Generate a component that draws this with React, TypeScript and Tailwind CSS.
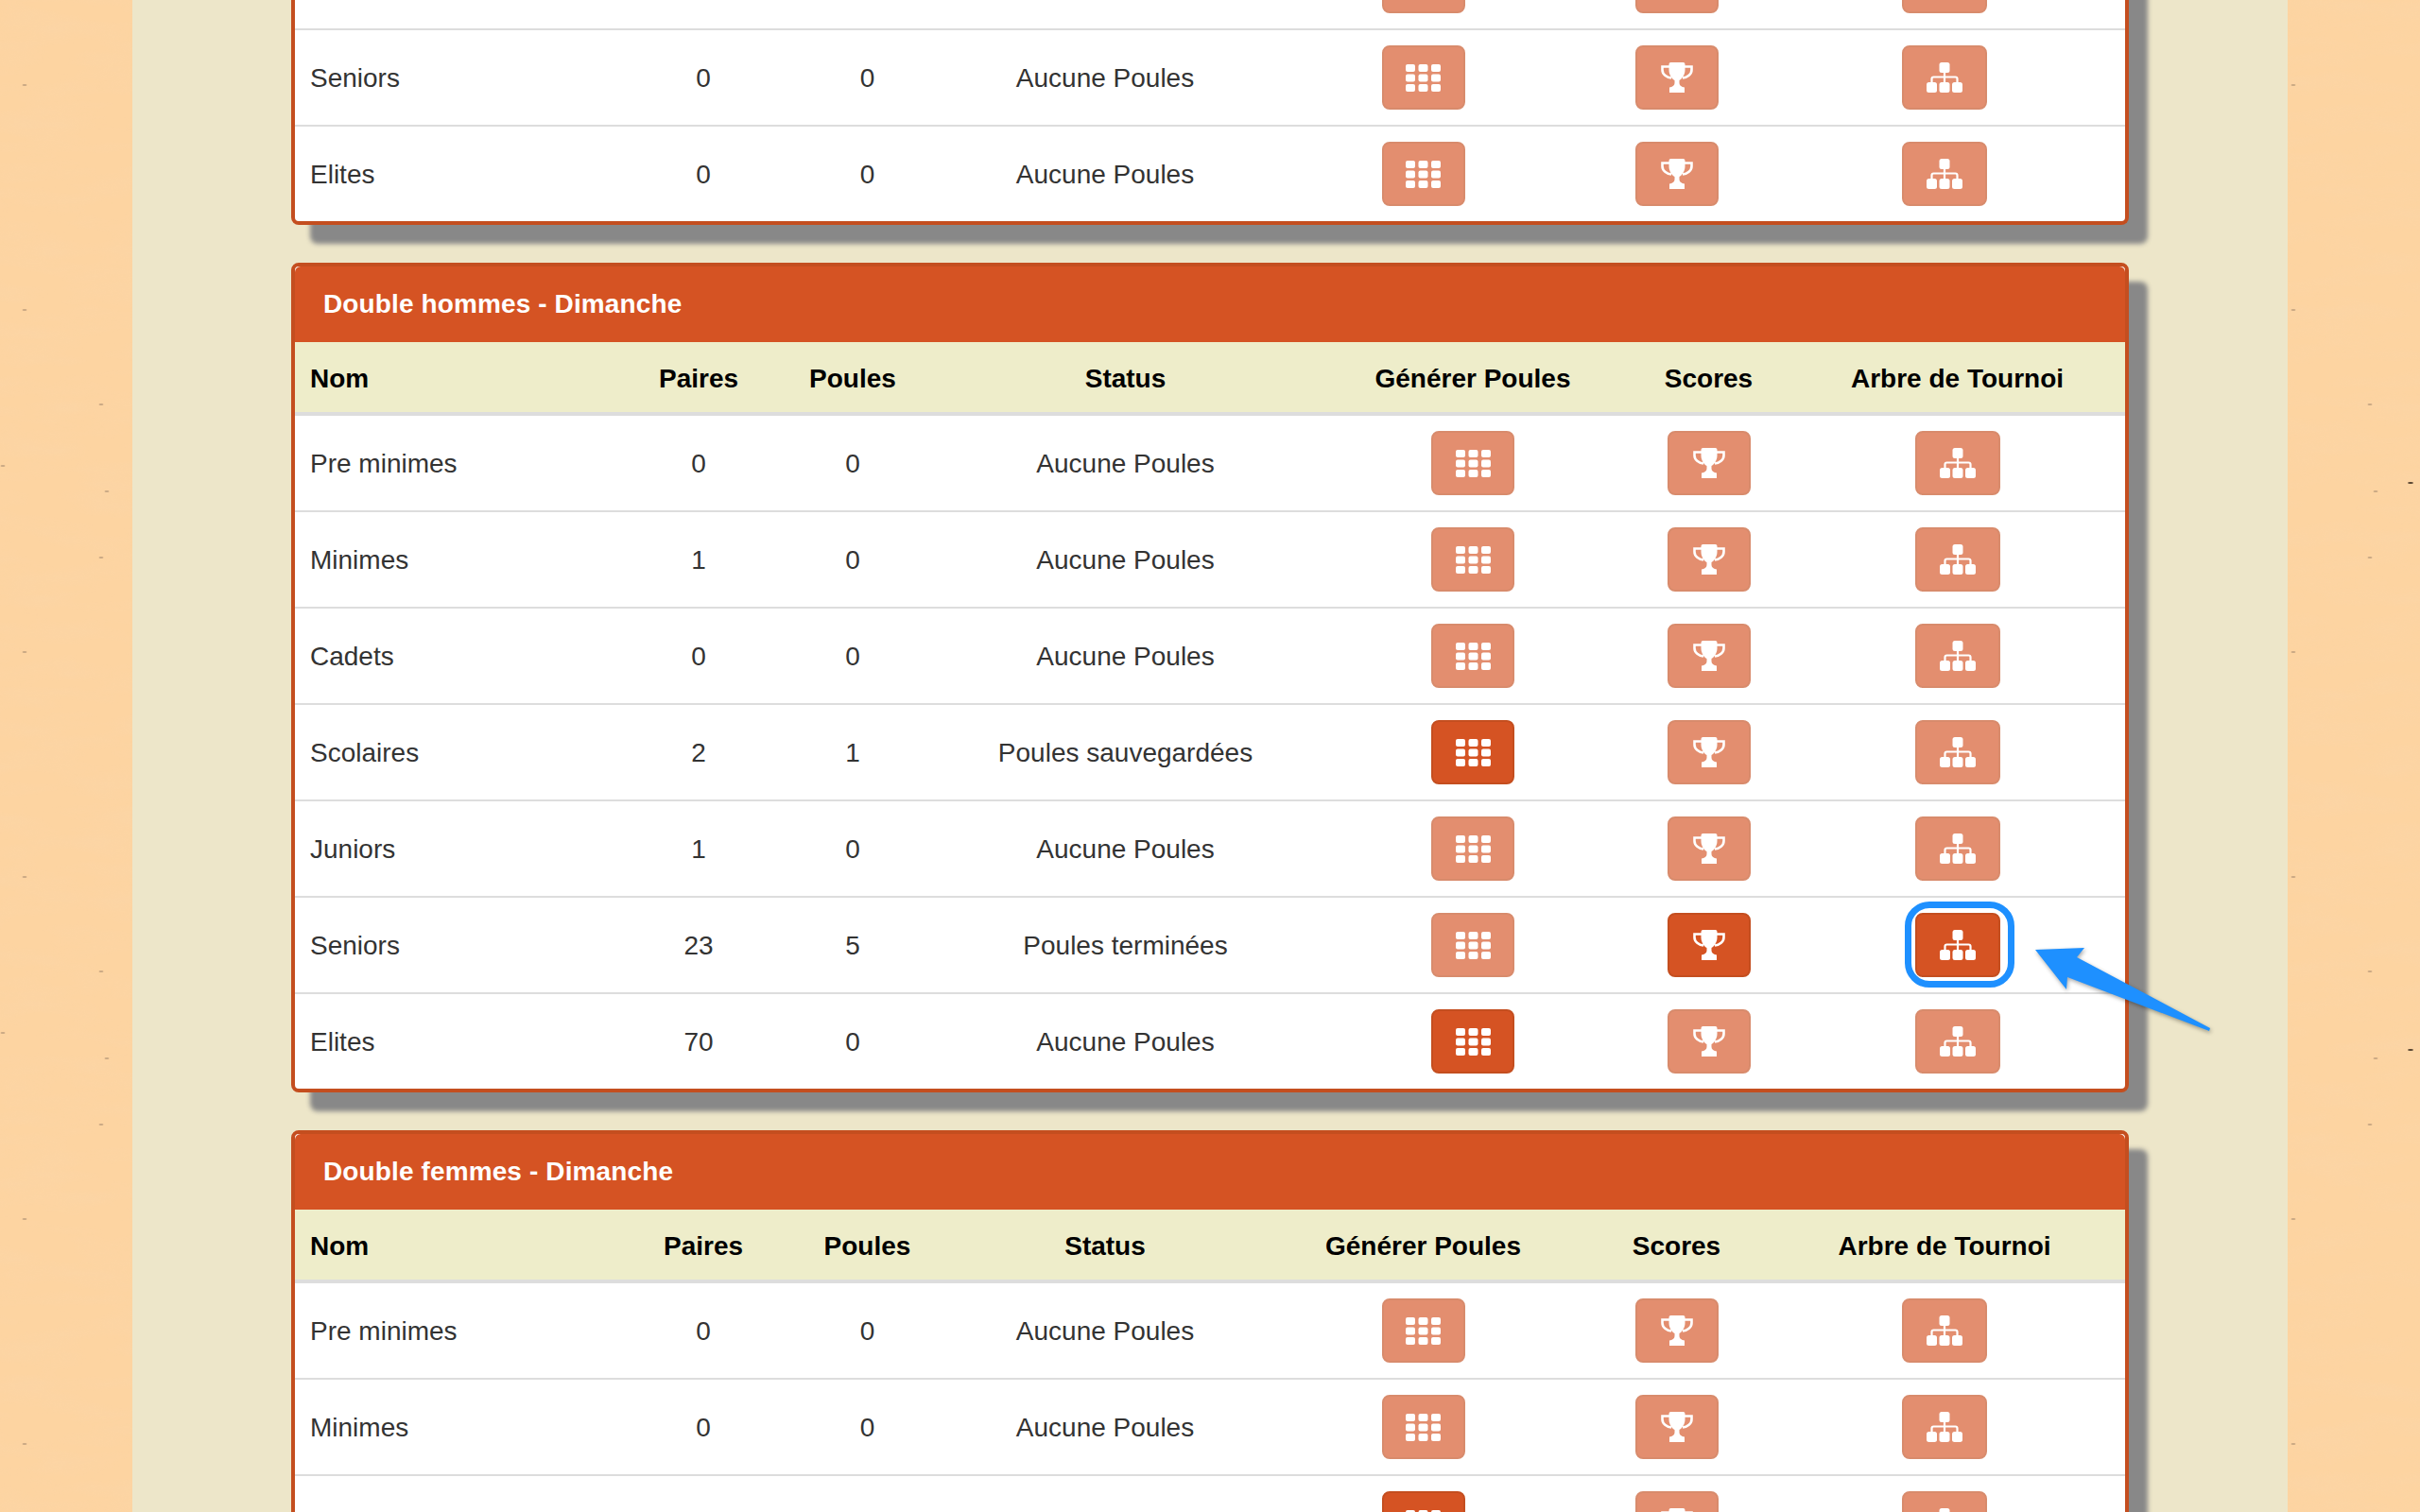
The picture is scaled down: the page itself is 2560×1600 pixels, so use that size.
const wideStatus = ["w-[349px]", "w-[156px]", "w-[170px]", "w-[407px]", "w-[328px]", "w-[171px]", "w-[355px]"];
const wideButtons = ["w-[349px]", "w-[166px]", "w-[181px]", "w-[322px]", "w-[351px]", "w-[185px]", "w-[382px]"];

const headers = ["Nom", "Paires", "Poules", "Status", "Générer Poules", "Scores", "Arbre de Tournoi"];

interface Row {
  name?: string;
  pairs?: number;
  pools?: number;
  status?: string;
  gen?: boolean;
  score?: boolean;
  tree?: boolean;
  // blue ring drawn by hand on the screenshot
  ring?: boolean;
}

const none = "Aucune Poules";

const doubleHommes: Row[] = [
  { name: "Pre minimes", pairs: 0, pools: 0, status: none },
  { name: "Minimes", pairs: 1, pools: 0, status: none },
  { name: "Cadets", pairs: 0, pools: 0, status: none },
  { name: "Scolaires", pairs: 2, pools: 1, status: "Poules sauvegardées", gen: true },
  { name: "Juniors", pairs: 1, pools: 0, status: none },
  { name: "Seniors", pairs: 23, pools: 5, status: "Poules terminées", score: true, tree: true, ring: true },
  { name: "Elites", pairs: 70, pools: 0, status: none, gen: true },
];

function GridIcon() {
  const xs = [0, 13.5, 27];
  const ys = [0, 10.5, 21];
  return (
    <svg width="37" height="29" viewBox="0 0 37 29" fill="#fff">
      {ys.map((y) => xs.map((x) => <rect key={`${x}-${y}`} x={x} y={y} width="10" height="8" rx="2" />))}
    </svg>
  );
}

function TrophyIcon() {
  return (
    <svg width="34" height="32" viewBox="0 0 34 32" fill="#fff">
      <path d="M8.5 2Q8.5 0 10.5 0H23.5Q25.5 0 25.5 2V8C25.5 14 21.5 18 19.5 19V22C19.5 24.5 22 26 25 26.5V32H9V26.5C12 26 14.5 24.5 14.5 22V19C12.5 18 8.5 14 8.5 8Z" />
      <path
        d="M9 4.5H1.5V8C1.5 12.5 6 16 11 16.5M25 4.5H32.5V8C32.5 12.5 28 16 23 16.5"
        fill="none"
        stroke="#fff"
        strokeWidth="2.6"
      />
    </svg>
  );
}

function SitemapIcon() {
  return (
    <svg width="38" height="32" viewBox="0 0 38 32" fill="#fff">
      <rect x="13.5" y="0" width="11" height="11" rx="2.5" />
      <rect x="0" y="21" width="11" height="11" rx="2.5" />
      <rect x="13.5" y="21" width="11" height="11" rx="2.5" />
      <rect x="27" y="21" width="11" height="11" rx="2.5" />
      <path d="M19 10V22M5.5 22V17.5Q5.5 15.5 7.5 15.5H30.5Q32.5 15.5 32.5 17.5V22" fill="none" stroke="#fff" strokeWidth="2.2" />
    </svg>
  );
}

function ActionButton({ active, wide, children }: { active?: boolean; wide?: boolean; children: React.ReactNode }) {
  return (
    <button
      className={`flex h-[68px] items-center justify-center rounded-lg border-2 border-[#c44e1f] bg-[#d55323] ${
        wide ? "w-[90px]" : "w-[88px]"
      } ${active ? "" : "opacity-65"}`}
    >
      {children}
    </button>
  );
}

function PouleTable({ title, widths, rows }: { title?: string; widths: string[]; rows: Row[] }) {
  return (
    <table className="w-full table-fixed border-separate border-spacing-0">
      <colgroup>
        {widths.map((w) => (
          <col key={w} className={w} />
        ))}
      </colgroup>
      {title && (
        <thead>
          <tr className="bg-[#eeedca] text-black">
            {headers.map((h, i) => (
              <th key={h} className={`h-[78px] border-b-4 border-[#ddd] pt-[3px] font-bold ${i === 0 ? "pl-4 text-left" : "text-center"}`}>
                {h}
              </th>
            ))}
          </tr>
        </thead>
      )}
      <tbody>
        {rows.map((r, i) => {
          const line = i === 0 && title ? "" : "border-t-2 border-[#ddd]";
          const text = `pt-[18px] pb-4 text-center align-middle ${line}`;
          const cell = `py-4 align-middle ${line}`;
          return (
            <tr key={i}>
              <td className={`pt-[18px] pb-4 pl-4 align-middle ${line}`}>{r.name}</td>
              <td className={text}>{r.pairs}</td>
              <td className={text}>{r.pools}</td>
              <td className={text}>{r.status}</td>
              <td className={cell}>
                <div className="flex justify-center">
                  <ActionButton active={r.gen}>
                    <GridIcon />
                  </ActionButton>
                </div>
              </td>
              <td className={cell}>
                <div className="flex justify-center">
                  <ActionButton active={r.score}>
                    <TrophyIcon />
                  </ActionButton>
                </div>
              </td>
              <td className={cell}>
                <div className="flex justify-center">
                  <div className="relative">
                    <ActionButton active={r.tree} wide>
                      <SitemapIcon />
                    </ActionButton>
                    {r.ring && (
                      <div className="absolute -top-[12px] -right-[15px] -bottom-[11px] -left-[11px] rounded-[26px] border-[7px] border-[#1e90ff]" />
                    )}
                  </div>
                </div>
              </td>
            </tr>
          );
        })}
      </tbody>
    </table>
  );
}

function Panel({ title, widths, rows, cut }: { title?: string; widths: string[]; rows: Row[]; cut?: boolean }) {
  return (
    <div
      className={`mb-10 rounded-lg border-4 border-[#c44e1f] bg-white shadow-[20px_20px_5px_#888] ${
        cut ? "-mt-[72px] border-t-0" : ""
      }`}
    >
      {title && (
        <div className="flex h-20 items-center rounded-t-[6px] bg-[#d55323] px-[30px] font-bold tracking-[0.12px] text-white">
          {title}
        </div>
      )}
      <PouleTable title={title} widths={widths} rows={rows} />
    </div>
  );
}

// paper texture of the page edges, the specks repeat every 600px
const leftSpecks = [
  [26, 90],
  [26, 328],
  [107, 428],
  [3, 493],
  [113, 520],
  [107, 590],
];
const rightSpecks = [
  [6, 90],
  [6, 328],
  [87, 428],
  [130, 511, 1],
  [93, 520],
  [87, 590],
];

function PaperStrip({ id, specks }: { id: string; specks: number[][] }) {
  return (
    <div className="relative w-[140px] shrink-0 overflow-hidden bg-[#fdd4a1]">
      <svg width="140" height="1600" className="absolute inset-0">
        <filter id={id}>
          <feTurbulence type="fractalNoise" baseFrequency="0.012 0.05" numOctaves="3" seed={id === "l" ? 3 : 8} />
          <feColorMatrix values="0 0 0 0 0.93  0 0 0 0 0.68  0 0 0 0 0.45  1.4 0 0 0 -0.55" />
        </filter>
        <rect width="140" height="1600" filter={`url(#${id})`} opacity="0.3" />
        {[0, 600, 1200].map((dy) =>
          specks.map(([x, y, dark]) => (
            <ellipse
              key={y + dy}
              cx={x}
              cy={y + dy}
              rx={dark ? 3 : 2.5}
              ry="1"
              fill={dark ? "#3f2f20" : "#a58a70"}
              opacity={dark ? 0.9 : 0.6}
            />
          )),
        )}
      </svg>
    </div>
  );
}

export default function App() {
  return (
    <div className="relative flex h-[1600px] overflow-hidden bg-[#ede6c9] font-['Liberation_Sans',Arial,sans-serif] text-[28px] leading-10 text-[#333]">
      <PaperStrip id="l" specks={leftSpecks} />
      <main className="min-w-0 flex-1 px-[168px]">
        <Panel
          cut
          widths={wideButtons}
          rows={[
            {},
            { name: "Seniors", pairs: 0, pools: 0, status: none },
            { name: "Elites", pairs: 0, pools: 0, status: none },
          ]}
        />
        <Panel title="Double hommes - Dimanche" widths={wideStatus} rows={doubleHommes} />
        <Panel
          title="Double femmes - Dimanche"
          widths={wideButtons}
          rows={[
            { name: "Pre minimes", pairs: 0, pools: 0, status: none },
            { name: "Minimes", pairs: 0, pools: 0, status: none },
            { gen: true },
          ]}
        />
      </main>
      <PaperStrip id="r" specks={rightSpecks} />

      {/* annotation arrow */}
      <svg width="200" height="100" viewBox="0 0 200 100" className="absolute top-[1000px] left-[2150px] drop-shadow-[1px_2px_2px_rgba(0,0,0,0.35)]">
        <polygon points="3,5 55,3 47,13 188,88 187,91 37,34 36,47" fill="#1e90ff" />
      </svg>
    </div>
  );
}
